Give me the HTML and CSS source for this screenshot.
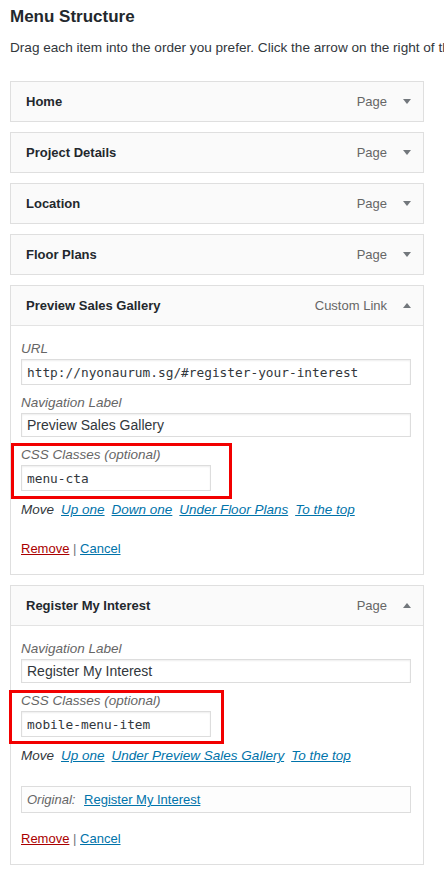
FILE: index.html
```html
<!DOCTYPE html>
<html lang="en">
<head>
  <meta charset="UTF-8" />
  <meta name="viewport" content="width=device-width, initial-scale=1.0" />
  <title>Menu Structure</title>
  <link rel="stylesheet" href="styles.css">
</head>
<body>
  <div class="wrap">
    <h3 class="page-title">Menu Structure</h3>
    <p class="intro">Drag each item into the order you prefer. Click the arrow on the right of the item to reveal additional configuration options.</p>

    <ul class="menu">
      <li class="item">
        <div class="handle"><span class="title">Home</span><span class="type">Page</span><span class="arrow down"></span></div>
      </li>
      <li class="item">
        <div class="handle"><span class="title">Project Details</span><span class="type">Page</span><span class="arrow down"></span></div>
      </li>
      <li class="item">
        <div class="handle"><span class="title">Location</span><span class="type">Page</span><span class="arrow down"></span></div>
      </li>
      <li class="item">
        <div class="handle"><span class="title">Floor Plans</span><span class="type">Page</span><span class="arrow down"></span></div>
      </li>

      <li class="item open">
        <div class="handle"><span class="title">Preview Sales Gallery</span><span class="type">Custom Link</span><span class="arrow up"></span></div>
        <div class="settings">
          <div class="field">
            <label>URL</label>
            <input type="text" class="code tall" value="http://nyonaurum.sg/#register-your-interest" />
          </div>
          <div class="field">
            <label>Navigation Label</label>
            <input type="text" value="Preview Sales Gallery" />
          </div>
          <div class="field">
            <span class="mark mark-first"></span>
            <label>CSS Classes (optional)</label>
            <input type="text" class="code tall half" value="menu-cta" />
          </div>
          <div class="move">
            <span>Move</span>
            <a href="#">Up one</a>
            <a href="#">Down one</a>
            <a href="#">Under Floor Plans</a>
            <a href="#">To the top</a>
          </div>
          <div class="actions">
            <a href="#" class="remove">Remove</a> <span class="sep">|</span> <a href="#">Cancel</a>
          </div>
        </div>
      </li>

      <li class="item open">
        <div class="handle"><span class="title">Register My Interest</span><span class="type">Page</span><span class="arrow up"></span></div>
        <div class="settings">
          <div class="field">
            <label>Navigation Label</label>
            <input type="text" value="Register My Interest" />
          </div>
          <div class="field">
            <span class="mark mark-second"></span>
            <label>CSS Classes (optional)</label>
            <input type="text" class="code tall half" value="mobile-menu-item" />
          </div>
          <div class="move">
            <span>Move</span>
            <a href="#">Up one</a>
            <a href="#">Under Preview Sales Gallery</a>
            <a href="#">To the top</a>
          </div>
          <div class="original">
            <span class="original-label">Original:</span>
            <a href="#">Register My Interest</a>
          </div>
          <div class="actions">
            <a href="#" class="remove">Remove</a> <span class="sep">|</span> <a href="#">Cancel</a>
          </div>
        </div>
      </li>
    </ul>
  </div>
</body>
</html>
```

FILE: styles.css
```css
html, body {
  margin: 0;
  padding: 0;
  background: #fff;
  overflow-x: hidden;
}
body {
  font-family: "Liberation Sans", Arial, sans-serif;
  font-size: 13px;
  color: #23282d;
}
.wrap {
  padding: 0 10px;
}
.page-title {
  margin: 5px 0 0;
  font-size: 17px;
  line-height: 24px;
  font-weight: 700;
  color: #23282d;
}
.intro {
  margin: 10px -10px 0 0;
  line-height: 18px;
  font-size: 13.6px;
  white-space: nowrap;
  overflow: hidden;
  color: #32373c;
}
.menu {
  list-style: none;
  margin: 24px 0 0;
  padding: 0;
  width: 414px;
}
.item {
  border: 1px solid #dfdfdf;
  background: #fff;
  margin-bottom: 10px;
}
.handle {
  display: flex;
  align-items: center;
  background: #fafafa;
  padding: 10px 12px 10px 15px;
  line-height: 19px;
}
.open .handle {
  border-bottom: 1px solid #e3e3e3;
}
.title {
  flex: 1;
  font-weight: 700;
  color: #23282d;
}
.type {
  color: #666;
}
.arrow {
  width: 0;
  height: 0;
  margin-left: 16px;
  border-left: 4px solid transparent;
  border-right: 4px solid transparent;
}
.arrow.down {
  border-top: 5px solid #72777c;
}
.arrow.up {
  border-bottom: 5px solid #72777c;
}

.settings {
  padding: 14px 12px 16px 10px;
}
.field {
  position: relative;
  margin-bottom: 9px;
}
.field label {
  display: block;
  font-style: italic;
  font-size: 13.5px;
  line-height: 18px;
  color: #666;
}
.field input {
  display: block;
  box-sizing: border-box;
  width: 390px;
  height: 24px;
  margin: 1px 0 0;
  padding: 0 5px;
  border: 1px solid #ddd;
  border-radius: 0;
  box-shadow: inset 0 1px 2px rgba(0, 0, 0, 0.07);
  background: #fff;
  font-family: "Liberation Sans", Arial, sans-serif;
  font-size: 14px;
  color: #32373c;
  outline: none;
}
.field input.tall {
  height: 26px;
}
.field input.code {
  font-family: "DejaVu Sans Mono", monospace;
  font-size: 12.8px;
}
.field input.half {
  width: 190px;
}

/* red annotation boxes drawn over the css class fields */
.mark {
  position: absolute;
  border: 3px solid #f20000;
  box-sizing: border-box;
  pointer-events: none;
}
.mark-first {
  top: -3px;
  left: -10px;
  width: 221px;
  height: 56px;
}
.mark-second {
  top: -2px;
  left: -12px;
  width: 215px;
  height: 54px;
}

.move {
  display: flex;
  gap: 7px;
  margin-top: 10px;
  font-style: italic;
  font-size: 13.5px;
  line-height: 18px;
  color: #32373c;
}
a {
  color: #0073aa;
  text-decoration: underline;
}
.original {
  margin-top: 21px;
  width: 390px;
  box-sizing: border-box;
  border: 1px solid #ddd;
  padding: 4px 5px;
  line-height: 17px;
  background: #fdfdfd;
}
.original-label {
  font-style: italic;
  color: #666;
  margin-right: 5px;
}
.actions {
  margin-top: 21px;
  line-height: 18px;
}
.original + .actions {
  margin-top: 17px;
}
.remove {
  color: #a00;
}
.sep {
  color: #72777c;
}
```
